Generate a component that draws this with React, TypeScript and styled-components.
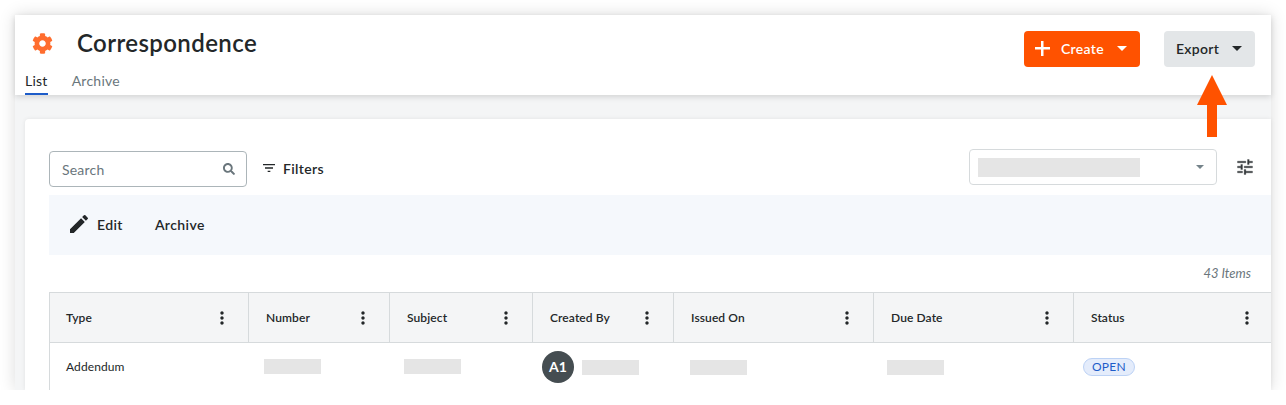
import styled, { createGlobalStyle } from "styled-components";
import { FaCog, FaSearch } from "react-icons/fa";
import { MdEdit, MdFilterList, MdMoreVert, MdTune } from "react-icons/md";

const columnas = ["Type", "Number", "Subject", "Created By", "Issued On", "Due Date", "Status"];

export default function App() {
  return (
    <>
      <GlobalStyle />
      <Frame>
        <Header>
          <HeaderTop>
            <TitleGroup>
              <GearIcon />
              <Title>Correspondence</Title>
            </TitleGroup>
            <HeaderActions>
              <CreateButton>
                <PlusMark />
                Create
                <Caret $color="#ffffff" />
              </CreateButton>
              <ExportButton>
                Export
                <Caret $color="#232729" />
              </ExportButton>
            </HeaderActions>
          </HeaderTop>
          <Tabs>
            <Tab $active>List</Tab>
            <Tab>Archive</Tab>
          </Tabs>
        </Header>
        <Body>
          <Card>
            <Toolbar>
              <SearchBox>
                <SearchText>Search</SearchText>
                <FaSearch size={12} color="#6a767c" />
              </SearchBox>
              <FiltersButton>
                <MdFilterList size={16} color="#232729" />
                Filters
              </FiltersButton>
              <SelectBox>
                <Blank $width={162} $height={19} />
                <Caret $color="#75838a" $small />
              </SelectBox>
              <ConfigButton>
                <TuneIcon />
              </ConfigButton>
            </Toolbar>
            <BulkBar>
              <BulkAction>
                <MdEdit size={24} color="#232729" />
                Edit
              </BulkAction>
              <BulkAction>Archive</BulkAction>
            </BulkBar>
            <ItemCount>43 Items</ItemCount>
            <Table>
              {columnas.map((titulo) => (
                <HeadCell key={titulo}>
                  {titulo}
                  <MdMoreVert size={20} color="#232729" />
                </HeadCell>
              ))}
              <Cell>Addendum</Cell>
              <Cell $pad={15}>
                <Blank $width={57} $height={15} />
              </Cell>
              <Cell $pad={14}>
                <Blank $width={57} $height={15} />
              </Cell>
              <Cell $pad={9}>
                <Avatar>A1</Avatar>
                <Blank $width={57} $height={15} $down />
              </Cell>
              <Cell $pad={16}>
                <Blank $width={57} $height={15} $down />
              </Cell>
              <Cell $pad={13}>
                <Blank $width={57} $height={15} $down />
              </Cell>
              <Cell $pad={9}>
                <StatusPill>OPEN</StatusPill>
              </Cell>
            </Table>
          </Card>
        </Body>
        <ArrowMark viewBox="0 0 30 62" aria-hidden="true">
          <path d="M15 0 L30 30 L20 30 L20 62 L10 62 L10 30 L0 30 Z" fill="#ff5200" />
        </ArrowMark>
      </Frame>
    </>
  );
}

const GlobalStyle = createGlobalStyle`
  html, body {
    margin: 0;
    background: #ffffff;
    font-family: "Lato", "Liberation Sans", sans-serif;
    color: #232729;
  }

  * {
    box-sizing: border-box;
  }
`;

const Frame = styled.div`
  position: relative;
  width: 1256px;
  height: 375px;
  margin: 15px 0 0 15px;
  display: flex;
  flex-direction: column;
  background: #f4f5f6;
  box-shadow: 0 0 16px rgba(0, 0, 0, 0.14);
`;

const Header = styled.header`
  position: relative;
  z-index: 1;
  height: 80px;
  padding: 16px 16px 0 10px;
  background: #ffffff;
  box-shadow: 0 2px 6px rgba(0, 0, 0, 0.14);
`;

const HeaderTop = styled.div`
  display: flex;
  justify-content: space-between;
  align-items: flex-start;
  height: 42px;
`;

const TitleGroup = styled.div`
  display: flex;
  align-items: center;
  height: 24px;
`;

const GearIcon = styled(FaCog)`
  width: 21px;
  height: 21px;
  margin-left: 7px;
  color: #ff6d2e;
`;

const Title = styled.h1`
  margin: 0 0 0 24px;
  font-size: 24px;
  font-weight: 600;
  line-height: 24px;
  letter-spacing: 0.4px;
  color: #232729;
`;

const HeaderActions = styled.div`
  display: flex;
  gap: 24px;
`;

const CreateButton = styled.button`
  display: flex;
  align-items: center;
  width: 116px;
  height: 36px;
  padding: 0 13px 2px 11px;
  border: 0;
  border-radius: 4px;
  background: #ff5200;
  color: #ffffff;
  font: 600 14px "Lato", sans-serif;
  letter-spacing: 0.3px;
`;

const ExportButton = styled.button`
  display: flex;
  align-items: center;
  justify-content: space-between;
  width: 91px;
  height: 36px;
  padding: 0 13px 2px 12px;
  border: 0;
  border-radius: 4px;
  background: #e3e6e8;
  color: #232729;
  font: 600 14px "Lato", sans-serif;
  letter-spacing: 0.3px;
`;

const PlusMark = styled.span`
  width: 15px;
  height: 15px;
  margin-right: 11px;
  background:
    linear-gradient(#ffffff, #ffffff) center / 100% 2.5px no-repeat,
    linear-gradient(#ffffff, #ffffff) center / 2.5px 100% no-repeat;
`;

const Caret = styled.span<{ $color: string; $small?: boolean }>`
  width: 0;
  height: 0;
  margin-left: auto;
  border-left: ${(props) => (props.$small ? "4px" : "5px")} solid transparent;
  border-right: ${(props) => (props.$small ? "4px" : "5px")} solid transparent;
  border-top: ${(props) => (props.$small ? "4px" : "5px")} solid ${(props) => props.$color};
`;

const Tabs = styled.nav`
  display: flex;
  gap: 24px;
  height: 22px;
`;

const Tab = styled.span<{ $active?: boolean }>`
  height: 22px;
  font-size: 14px;
  line-height: 16px;
  letter-spacing: 0.25px;
  color: ${(props) => (props.$active ? "#232729" : "#6a767c")};
  border-bottom: 2px solid ${(props) => (props.$active ? "#1d5cc9" : "transparent")};
`;

const Body = styled.main`
  flex: 1;
  min-height: 0;
  padding: 24px 0 0 10px;
`;

const Card = styled.section`
  height: 271px;
  padding: 30px 0 0 24px;
  overflow: hidden;
  border-radius: 4px 0 0 0;
  background: #ffffff;
  box-shadow: 0 0 4px rgba(0, 0, 0, 0.08);
`;

const Toolbar = styled.div`
  display: flex;
  align-items: flex-start;
  height: 46px;
`;

const SearchBox = styled.div`
  display: flex;
  align-items: center;
  justify-content: space-between;
  width: 198px;
  height: 36px;
  margin-top: 2px;
  padding: 0 11px 0 12px;
  border: 1px solid #acb5b9;
  border-radius: 4px;
`;

const SearchText = styled.span`
  font-size: 14px;
  letter-spacing: 0.2px;
  color: #6a767c;
`;

const FiltersButton = styled.div`
  display: flex;
  align-items: center;
  gap: 6px;
  height: 36px;
  margin: 0 0 0 14px;
  padding-top: 2px;
  font-size: 14px;
  font-weight: 600;
  letter-spacing: 0.35px;
`;

const SelectBox = styled.div`
  display: flex;
  align-items: center;
  width: 248px;
  height: 36px;
  margin-left: auto;
  padding: 0 12px 0 8px;
  border: 1px solid #d6dadc;
  border-radius: 4px;
`;

const ConfigButton = styled.div`
  display: flex;
  align-items: center;
  width: 54px;
  height: 36px;
  padding-left: 18px;
`;

const TuneIcon = styled(MdTune)`
  width: 20px;
  height: 20px;
  color: #33383b;
  stroke: #33383b;
  stroke-width: 0.35;

  path[fill="none"] {
    stroke: none;
  }
`;

const Blank = styled.span<{ $width: number; $height: number; $down?: boolean }>`
  display: block;
  flex: none;
  width: ${(props) => props.$width}px;
  height: ${(props) => props.$height}px;
  margin-top: ${(props) => (props.$down ? "2px" : "0")};
  background: #e5e5e5;
`;

const BulkBar = styled.div`
  display: flex;
  align-items: center;
  gap: 32px;
  height: 60px;
  padding: 0 0 2px 18px;
  background: #f5f8fc;
`;

const BulkAction = styled.div`
  display: flex;
  align-items: center;
  gap: 6px;
  font-size: 14px;
  font-weight: 600;
  letter-spacing: 0.4px;
`;

const ItemCount = styled.div`
  height: 37px;
  padding: 10px 20px 0 0;
  text-align: right;
  font-size: 13px;
  font-style: italic;
  color: #6a767c;
`;

const Table = styled.div`
  display: grid;
  grid-template-columns: 199px 141px 143px 141px 200px 200px 199px;
  grid-template-rows: 50px 47px;
  border-top: 1px solid #d6dadc;
  border-left: 1px solid #d6dadc;
`;

const HeadCell = styled.div`
  display: flex;
  align-items: center;
  justify-content: space-between;
  padding: 0 16px 0 17px;
  border-right: 1px solid #d6dadc;
  border-bottom: 1px solid #d6dadc;
  background: #f4f5f6;
  font-size: 12px;
  font-weight: 600;
  letter-spacing: 0.1px;

  &:first-child {
    padding-left: 16px;
  }

  &:nth-child(7) {
    padding-right: 15px;
  }
`;

const Cell = styled.div<{ $pad?: number }>`
  display: flex;
  align-items: center;
  gap: 8px;
  padding-left: ${(props) => props.$pad ?? 16}px;
  font-size: 12px;
  letter-spacing: 0.1px;
`;

const Avatar = styled.span`
  display: flex;
  align-items: center;
  justify-content: center;
  width: 32px;
  height: 32px;
  border-radius: 50%;
  background: #454d51;
  color: #ffffff;
  font-size: 14px;
  font-weight: 700;
`;

const StatusPill = styled.span`
  display: flex;
  align-items: center;
  justify-content: center;
  width: 52px;
  height: 18px;
  border: 1px solid #bcd2f5;
  border-radius: 9px;
  background: #e4ecfb;
  color: #1d5cc9;
  font-size: 12px;
  letter-spacing: 0.3px;
`;

const ArrowMark = styled.svg`
  position: absolute;
  left: 1182px;
  top: 60px;
  z-index: 2;
  width: 30px;
  height: 62px;
`;
